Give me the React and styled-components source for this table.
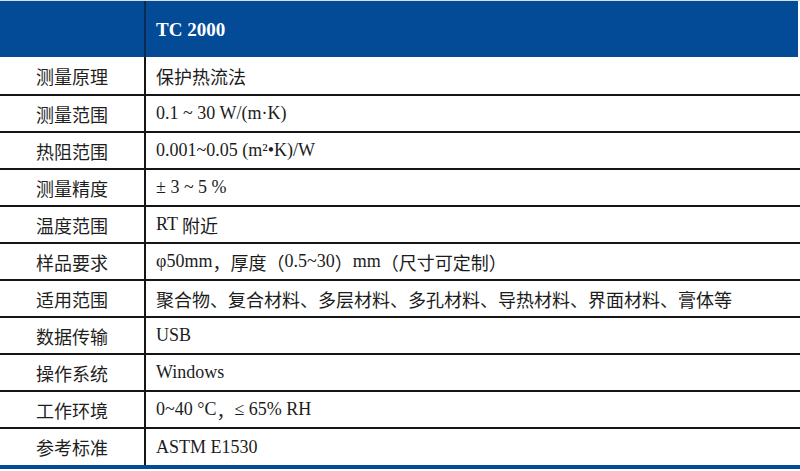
import React from "react";
import styled, { createGlobalStyle } from "styled-components";

const GlobalStyle = createGlobalStyle`
  html, body {
    margin: 0;
    padding: 0;
    background: #ffffff;
  }
`;

const Table = styled.div`
  width: 800px;
  border-top: 1px solid #d6dee9;
  border-bottom: 4px solid #034b96;
  font-family: "Liberation Serif", "Noto Sans CJK SC", serif;
  color: #1c1c1c;
`;

const HeaderRow = styled.div`
  display: grid;
  grid-template-columns: 146px 1fr;
  height: 56px;
  background: #044b97;
  margin-right: 2px;
`;

const HeaderBlank = styled.div`
  border-right: 2px solid #0d2a52;
`;

const HeaderTitle = styled.div`
  display: flex;
  align-items: center;
  padding-left: 10px;
  padding-top: 2px;
  color: #ffffff;
  font-weight: 700;
  font-size: 19px;
`;

const Row = styled.div`
  display: grid;
  grid-template-columns: 146px 1fr;
  height: ${({ $first, $last }) => ($first ? 37 : $last ? 36 : 35)}px;
  border-top: ${({ $first }) => ($first ? "none" : "2px solid #151515")};
`;

const Label = styled.div`
  display: flex;
  align-items: center;
  justify-content: center;
  border-right: 2px solid #151515;
  font-family: "Noto Sans CJK SC", sans-serif;
  font-size: 18px;
  color: #1f1f1f;
`;

const Value = styled.div`
  display: flex;
  align-items: center;
  padding-left: 10px;
  font-size: 18px;
  white-space: pre;
`;

const Han = styled.span`
  font-family: "Noto Sans CJK SC", sans-serif;
  font-size: 18px;
`;

const rows = [
  ["测量原理", <Han>保护热流法</Han>],
  ["测量范围", "0.1 ~ 30 W/(m·K)"],
  ["热阻范围", "0.001~0.05 (m²•K)/W"],
  ["测量精度", "± 3 ~ 5 %"],
  ["温度范围", <>RT <Han>附近</Han></>],
  [
    "样品要求",
    <>
      φ50mm<Han>，厚度（</Han>0.5~30<Han>）</Han>mm<Han>（尺寸可定制）</Han>
    </>,
  ],
  ["适用范围", <Han>聚合物、复合材料、多层材料、多孔材料、导热材料、界面材料、膏体等</Han>],
  ["数据传输", "USB"],
  ["操作系统", "Windows"],
  ["工作环境", <>0~40 °C<Han>，</Han>≤ 65% RH</>],
  ["参考标准", "ASTM E1530"],
];

export default function App() {
  return (
    <>
      <GlobalStyle />
      <Table>
        <HeaderRow>
          <HeaderBlank />
          <HeaderTitle>TC 2000</HeaderTitle>
        </HeaderRow>
        {rows.map(([label, value], i) => (
          <Row key={label} $first={i === 0} $last={i === rows.length - 1}>
            <Label>{label}</Label>
            <Value>{value}</Value>
          </Row>
        ))}
      </Table>
    </>
  );
}
